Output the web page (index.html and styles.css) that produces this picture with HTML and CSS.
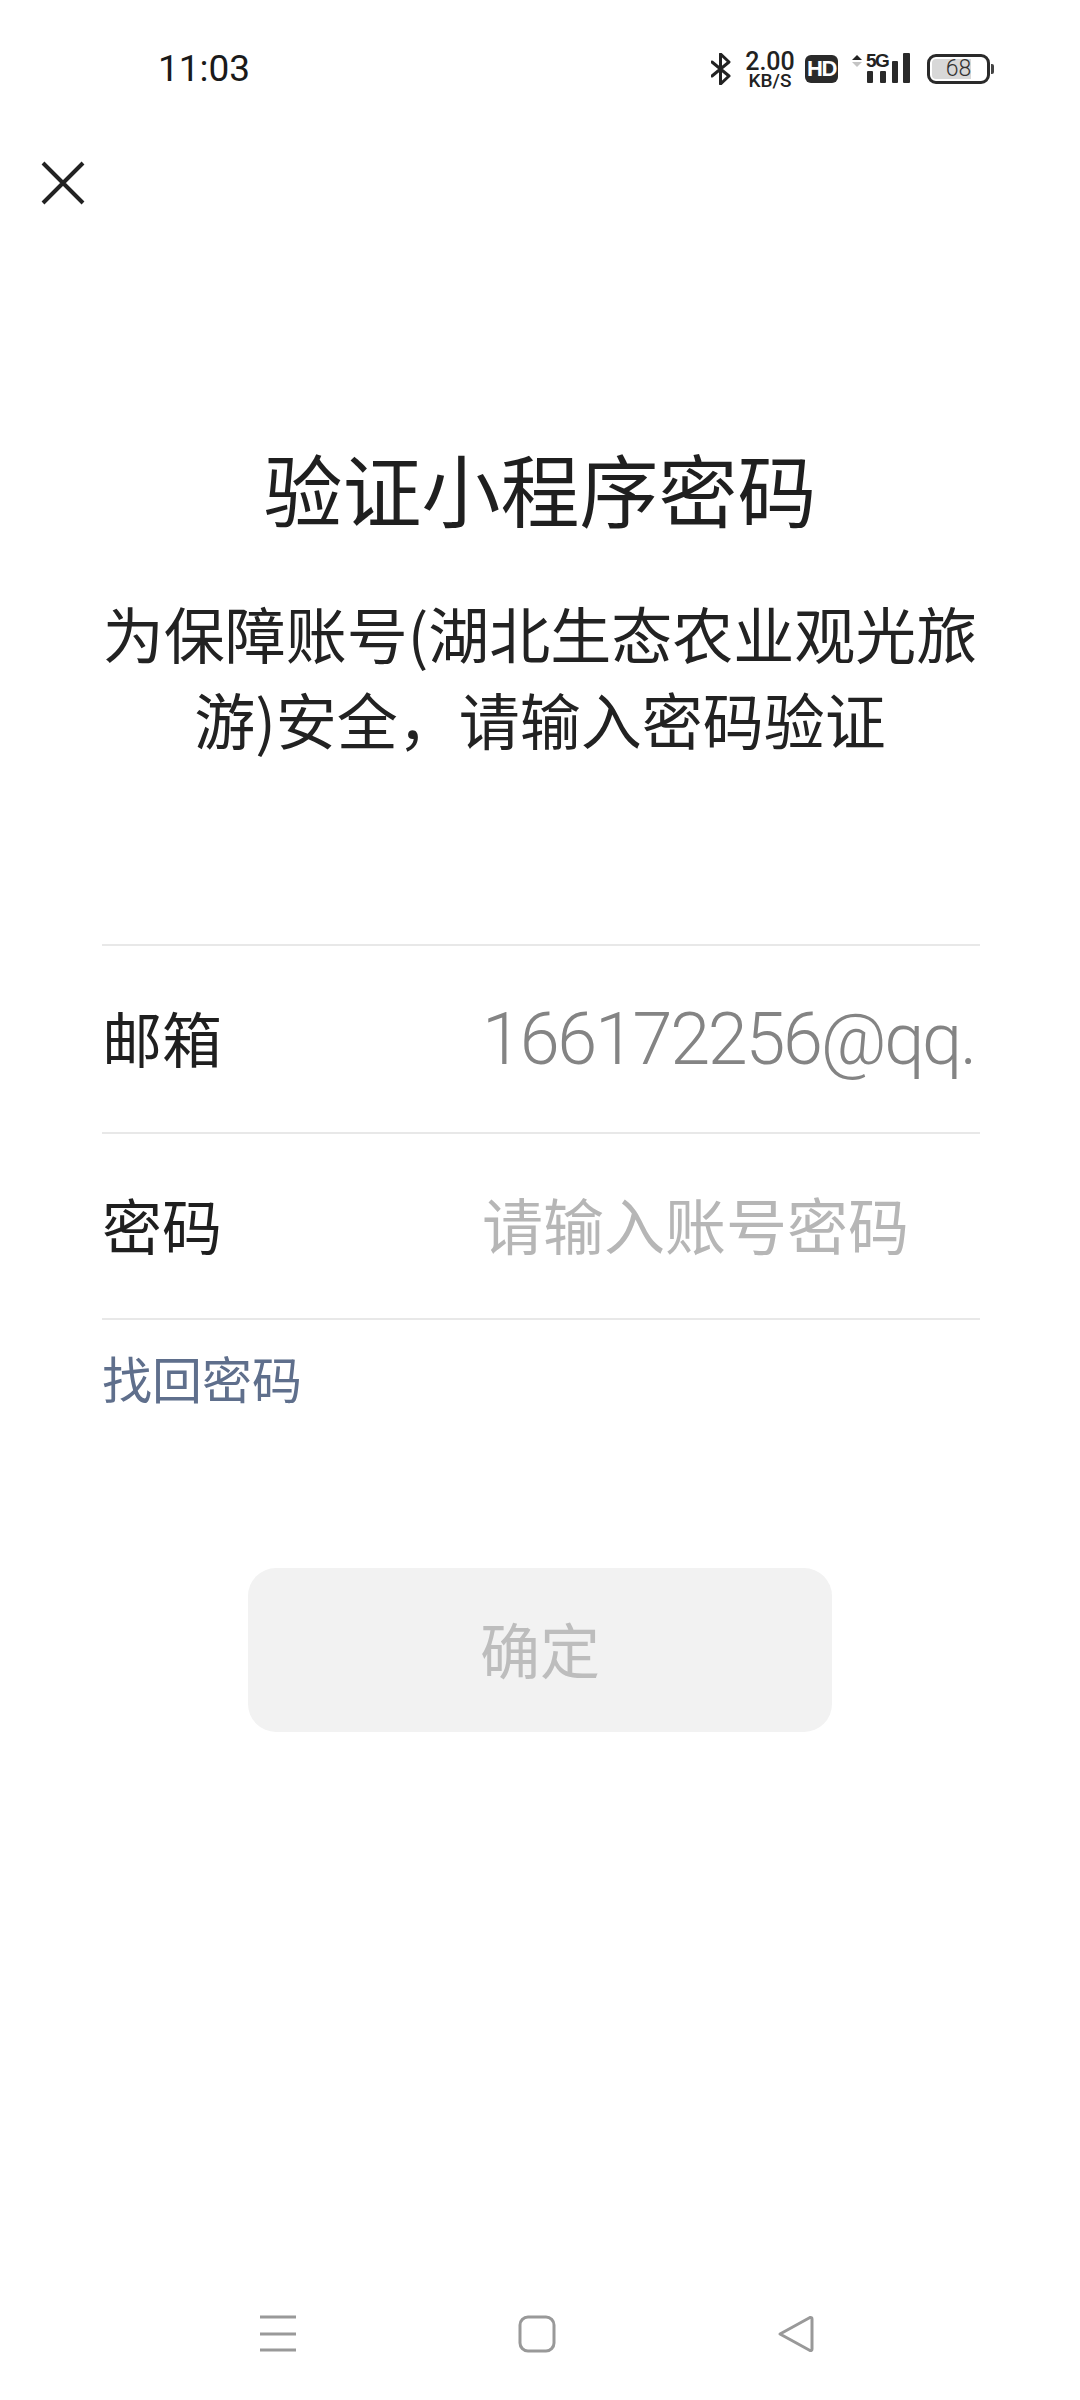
FILE: index.html
```html
<!DOCTYPE html>
<html lang="zh-CN">
<head>
<meta charset="utf-8">
<title>验证小程序密码</title>
<link rel="stylesheet" href="styles.css">
</head>
<body>
<div class="page">
  <header class="status">
    <span class="time">11:03</span>
    <div class="status-icons">
      <svg class="bt" width="20" height="32" viewBox="0 0 20 32"><path d="M1 9l17 14-8.500 8V1L18 9 1 23" fill="none" stroke="#222" stroke-width="3" stroke-linejoin="round" stroke-linecap="round"/></svg>
      <div class="speed"><span class="speed-num">2.00</span><span class="speed-unit">KB/S</span></div>
      <span class="hd">HD</span>
      <div class="signal">
        <svg width="60" height="32" viewBox="0 0 60 32">
          <path d="M1 7l5-5 5 5z" fill="#222"/><path d="M1 9l5 5 5-5z" fill="#c4c4c4"/>
          <rect x="16" y="18" width="6" height="12" rx="1" fill="#2a2a2a"/>
          <rect x="29" y="18" width="6" height="12" rx="1" fill="#2a2a2a"/>
          <rect x="41" y="8" width="6" height="22" rx="1" fill="#2a2a2a"/>
          <rect x="52" y="0" width="7" height="30" rx="1" fill="#2a2a2a"/>
        </svg>
        <span class="five-g">5G</span>
      </div>
      <div class="battery"><div class="battery-body"><span class="battery-fill"></span><span class="battery-num">68</span></div><span class="battery-tip"></span></div>
    </div>
  </header>
  <button class="close" aria-label="关闭"><svg width="46" height="46" viewBox="0 0 46 46"><path d="M3 3l40 40M43 3L3 43" stroke="#222" stroke-width="4" fill="none"/></svg></button>
  <h1 class="title">验证小程序密码</h1>
  <p class="subtitle">为保障账号(湖北生态农业观光旅<br>游)安全，请输入密码验证</p>
  <section class="form">
    <div class="row"><span class="label">邮箱</span><span class="value">166172256@qq.</span></div>
    <div class="row row-second"><span class="label">密码</span><span class="placeholder">请输入账号密码</span></div>
  </section>
  <a class="recover">找回密码</a>
  <button class="confirm">确定</button>
  <nav class="nav">
    <svg width="38" height="38" viewBox="0 0 38 38"><path d="M1 2h36M1 19h36M1 35h36" stroke="#999" stroke-width="3" fill="none"/></svg>
    <svg width="38" height="38" viewBox="0 0 38 38"><rect x="2" y="2" width="34" height="34" rx="8" stroke="#999" stroke-width="3" fill="none"/></svg>
    <svg width="38" height="38" viewBox="0 0 38 38"><path d="M3 19L33 2.500q2-.5 2 1.500v30q0 2-2 1.500z" stroke="#999" stroke-width="3" stroke-linejoin="round" fill="none"/></svg>
  </nav>
</div>
</body>
</html>
```
FILE: styles.css
```css
* { box-sizing: border-box; }
html, body { margin: 0; padding: 0; background: #fff; }
body { font-family: "Noto Sans CJK SC", "Liberation Sans", sans-serif; color: #1f1f1f; }
.page { width: 1080px; height: 2400px; display: flex; flex-direction: column; }

.status { height: 136px; padding: 49px 86px 0 158px; display: flex; justify-content: space-between; align-items: flex-start; }
.time { font: 400 37px/40px Roboto, sans-serif; color: #1a1a1a; }
.status-icons { display: flex; align-items: center; height: 40px; }
.speed { display: flex; flex-direction: column; align-items: center; margin: 2px 0 0 12px; width: 54px; color: #222; font-family: Roboto, sans-serif; }
.speed-num { font-size: 25px; line-height: 22px; font-weight: 500; }
.speed-unit { font-size: 19px; line-height: 16px; font-weight: 500; }
.hd { margin-left: 8px; width: 33px; height: 28px; border-radius: 6px; background: #2a2a2a; color: #fff; font: 700 22px/28px "Liberation Sans", sans-serif; text-align: center; letter-spacing: -1.500px; }
.signal { position: relative; margin-left: 13px; width: 60px; height: 32px; }
.signal svg { display: block; }
.five-g { position: absolute; left: 15px; top: -1px; font: 700 19px/17px "Liberation Sans", sans-serif; color: #222; letter-spacing: -1.500px; }
.battery { display: flex; align-items: center; margin-left: 16px; }
.battery-body { position: relative; width: 63px; height: 30px; border: 3px solid #2a2a2a; border-radius: 9px; display: flex; align-items: center; justify-content: center; }
.battery-fill { position: absolute; left: 2px; top: 2px; bottom: 2px; width: 39px; background: #d8d8d8; border-radius: 4px 0 0 4px; }
.battery-num { position: relative; font: 300 23px/24px Roboto, sans-serif; color: #333; }
.battery-tip { width: 3px; height: 10px; margin-left: 1px; background: #444; border-radius: 0 2px 2px 0; }

.close { align-self: flex-start; margin: 24px 0 0 40px; padding: 0; border: 0; background: none; width: 46px; height: 46px; }
.close svg { display: block; }

.title { margin: 0; padding-top: 225px; font-size: 79px; line-height: 114px; font-weight: 400; text-align: center; color: #1f1f1f; }
.subtitle { margin: 45px 0 0; font-size: 61px; line-height: 86px; font-weight: 400; text-align: center; color: #222; }

.form { margin: 182px 100px 0 102px; border-top: 2px solid #e8e8e8; }
.row { height: 188px; display: flex; align-items: center; border-bottom: 2px solid #e8e8e8; padding: 0 4px 6px 0; }
.row-second { height: 186px; }
.label { width: 380px; flex: none; font-size: 60px; font-weight: 400; color: #1f1f1f; }
.value { flex: 1; padding-top: 8px; white-space: nowrap; font: 300 72px/88px Roboto, sans-serif; letter-spacing: -2.300px; color: #848484; }
.placeholder { flex: 1; font-size: 61px; font-weight: 400; color: #b6b6b6; }

.recover { margin: 21px 0 0 102px; font-size: 50px; line-height: 72px; font-weight: 400; color: #5f6f8c; }

.confirm { display: block; align-self: center; margin: 155px 0 0; padding: 0 0 5px; width: 584px; height: 164px; border: 0; border-radius: 28px; background: #f2f2f2; font-family: inherit; font-size: 60px; font-weight: 400; color: #bdbdbd; }

.nav { margin-top: auto; margin-bottom: 47px; display: flex; justify-content: space-between; padding: 0 265px 0 259px; }
.nav svg { display: block; }
```
